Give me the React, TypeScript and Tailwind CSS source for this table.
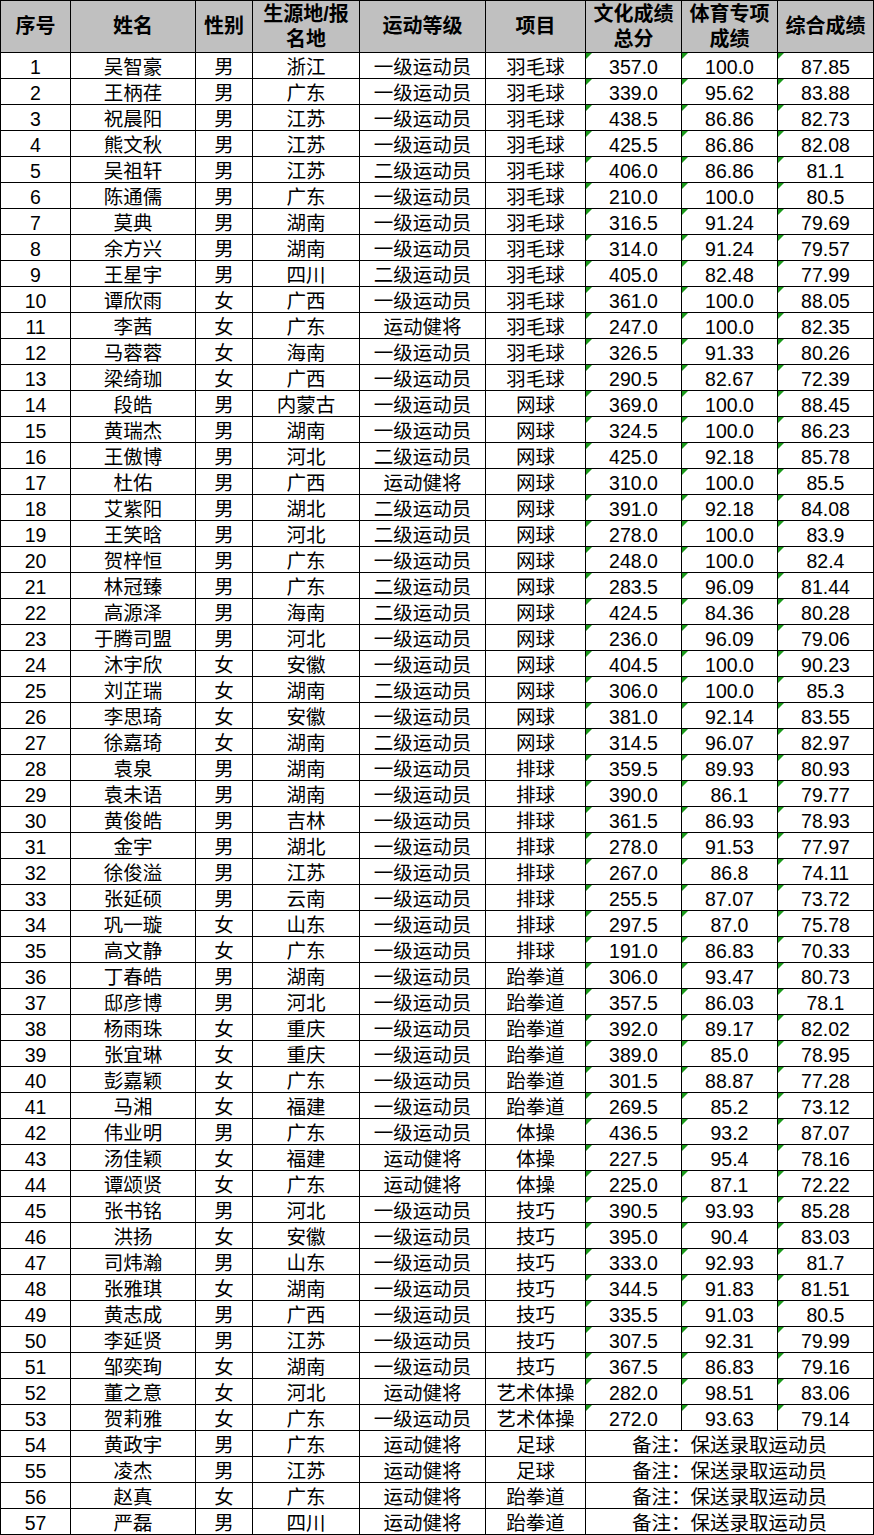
const rows: [string, string, string, string, string, string, string, string][] = [
  ["吴智豪", "男", "浙江", "一级运动员", "羽毛球", "357.0", "100.0", "87.85"],
  ["王柄荏", "男", "广东", "一级运动员", "羽毛球", "339.0", "95.62", "83.88"],
  ["祝晨阳", "男", "江苏", "一级运动员", "羽毛球", "438.5", "86.86", "82.73"],
  ["熊文秋", "男", "江苏", "一级运动员", "羽毛球", "425.5", "86.86", "82.08"],
  ["吴祖轩", "男", "江苏", "二级运动员", "羽毛球", "406.0", "86.86", "81.1"],
  ["陈通儒", "男", "广东", "一级运动员", "羽毛球", "210.0", "100.0", "80.5"],
  ["莫典", "男", "湖南", "一级运动员", "羽毛球", "316.5", "91.24", "79.69"],
  ["余方兴", "男", "湖南", "一级运动员", "羽毛球", "314.0", "91.24", "79.57"],
  ["王星宇", "男", "四川", "二级运动员", "羽毛球", "405.0", "82.48", "77.99"],
  ["谭欣雨", "女", "广西", "一级运动员", "羽毛球", "361.0", "100.0", "88.05"],
  ["李茜", "女", "广东", "运动健将", "羽毛球", "247.0", "100.0", "82.35"],
  ["马蓉蓉", "女", "海南", "一级运动员", "羽毛球", "326.5", "91.33", "80.26"],
  ["梁绮珈", "女", "广西", "一级运动员", "羽毛球", "290.5", "82.67", "72.39"],
  ["段皓", "男", "内蒙古", "一级运动员", "网球", "369.0", "100.0", "88.45"],
  ["黄瑞杰", "男", "湖南", "一级运动员", "网球", "324.5", "100.0", "86.23"],
  ["王傲博", "男", "河北", "二级运动员", "网球", "425.0", "92.18", "85.78"],
  ["杜佑", "男", "广西", "运动健将", "网球", "310.0", "100.0", "85.5"],
  ["艾紫阳", "男", "湖北", "二级运动员", "网球", "391.0", "92.18", "84.08"],
  ["王笑晗", "男", "河北", "二级运动员", "网球", "278.0", "100.0", "83.9"],
  ["贺梓恒", "男", "广东", "一级运动员", "网球", "248.0", "100.0", "82.4"],
  ["林冠臻", "男", "广东", "二级运动员", "网球", "283.5", "96.09", "81.44"],
  ["高源泽", "男", "海南", "二级运动员", "网球", "424.5", "84.36", "80.28"],
  ["于腾司盟", "男", "河北", "一级运动员", "网球", "236.0", "96.09", "79.06"],
  ["沐宇欣", "女", "安徽", "一级运动员", "网球", "404.5", "100.0", "90.23"],
  ["刘芷瑞", "女", "湖南", "二级运动员", "网球", "306.0", "100.0", "85.3"],
  ["李思琦", "女", "安徽", "一级运动员", "网球", "381.0", "92.14", "83.55"],
  ["徐嘉琦", "女", "湖南", "二级运动员", "网球", "314.5", "96.07", "82.97"],
  ["袁泉", "男", "湖南", "一级运动员", "排球", "359.5", "89.93", "80.93"],
  ["袁未语", "男", "湖南", "一级运动员", "排球", "390.0", "86.1", "79.77"],
  ["黄俊皓", "男", "吉林", "一级运动员", "排球", "361.5", "86.93", "78.93"],
  ["金宇", "男", "湖北", "一级运动员", "排球", "278.0", "91.53", "77.97"],
  ["徐俊溢", "男", "江苏", "一级运动员", "排球", "267.0", "86.8", "74.11"],
  ["张延硕", "男", "云南", "一级运动员", "排球", "255.5", "87.07", "73.72"],
  ["巩一璇", "女", "山东", "一级运动员", "排球", "297.5", "87.0", "75.78"],
  ["高文静", "女", "广东", "一级运动员", "排球", "191.0", "86.83", "70.33"],
  ["丁春皓", "男", "湖南", "一级运动员", "跆拳道", "306.0", "93.47", "80.73"],
  ["邸彦博", "男", "河北", "一级运动员", "跆拳道", "357.5", "86.03", "78.1"],
  ["杨雨珠", "女", "重庆", "一级运动员", "跆拳道", "392.0", "89.17", "82.02"],
  ["张宜琳", "女", "重庆", "一级运动员", "跆拳道", "389.0", "85.0", "78.95"],
  ["彭嘉颖", "女", "广东", "一级运动员", "跆拳道", "301.5", "88.87", "77.28"],
  ["马湘", "女", "福建", "一级运动员", "跆拳道", "269.5", "85.2", "73.12"],
  ["伟业明", "男", "广东", "一级运动员", "体操", "436.5", "93.2", "87.07"],
  ["汤佳颖", "女", "福建", "运动健将", "体操", "227.5", "95.4", "78.16"],
  ["谭颂贤", "女", "广东", "运动健将", "体操", "225.0", "87.1", "72.22"],
  ["张书铭", "男", "河北", "一级运动员", "技巧", "390.5", "93.93", "85.28"],
  ["洪扬", "女", "安徽", "一级运动员", "技巧", "395.0", "90.4", "83.03"],
  ["司炜瀚", "男", "山东", "一级运动员", "技巧", "333.0", "92.93", "81.7"],
  ["张雅琪", "女", "湖南", "一级运动员", "技巧", "344.5", "91.83", "81.51"],
  ["黄志成", "男", "广西", "一级运动员", "技巧", "335.5", "91.03", "80.5"],
  ["李延贤", "男", "江苏", "一级运动员", "技巧", "307.5", "92.31", "79.99"],
  ["邹奕珣", "女", "湖南", "一级运动员", "技巧", "367.5", "86.83", "79.16"],
  ["董之意", "女", "河北", "运动健将", "艺术体操", "282.0", "98.51", "83.06"],
  ["贺莉雅", "女", "广东", "一级运动员", "艺术体操", "272.0", "93.63", "79.14"],
];

// 保送录取 rows: no scores, one merged remark cell
const recommended: [string, string, string, string, string][] = [
  ["黄政宇", "男", "广东", "运动健将", "足球"],
  ["凌杰", "男", "江苏", "运动健将", "足球"],
  ["赵真", "女", "广东", "运动健将", "跆拳道"],
  ["严磊", "男", "四川", "运动健将", "跆拳道"],
];

const headers = ["序号", "姓名", "性别", "生源地/报名地", "运动等级", "项目", "文化成绩总分", "体育专项成绩", "综合成绩"];

const cell = "flex items-center justify-center bg-white pt-[4px] leading-[21px] whitespace-nowrap";

const Cell = ({ children, flag = false }: { children: React.ReactNode; flag?: boolean }) => (
  <div className={`${cell} relative`}>
    {/* excel "number stored as text" marker */}
    {flag && (
      <span className="absolute left-0 top-0 h-0 w-0 border-t-[6px] border-r-[6px] border-t-[#1a9a1a] border-r-transparent" />
    )}
    {children}
  </div>
);

export default function App() {
  return (
    <div
      className="grid w-[874px] grid-cols-[69px_124px_56px_106px_125px_99px_95px_95px_95px] auto-rows-[25px] gap-px bg-black p-px text-[19.5px] text-black"
      style={{ fontFamily: '"Liberation Sans", Arial, "Noto Sans CJK SC", sans-serif' }}
    >
      {headers.map((h) => (
        <div
          key={h}
          className="row-span-2 flex items-center justify-center bg-[#c0c0c0] px-1 text-center text-[20px] font-bold leading-[25px]"
        >
          {h}
        </div>
      ))}

      {rows.map((r, i) => (
        <div key={i} className="contents">
          <Cell>{i + 1}</Cell>
          <Cell>{r[0]}</Cell>
          <Cell>{r[1]}</Cell>
          <Cell>{r[2]}</Cell>
          <Cell>{r[3]}</Cell>
          <Cell>{r[4]}</Cell>
          <Cell flag>{r[5]}</Cell>
          <Cell flag>{r[6]}</Cell>
          <Cell flag>{r[7]}</Cell>
        </div>
      ))}

      {recommended.map((r, i) => (
        <div key={i} className="contents">
          <Cell>{rows.length + i + 1}</Cell>
          <Cell>{r[0]}</Cell>
          <Cell>{r[1]}</Cell>
          <Cell>{r[2]}</Cell>
          <Cell>{r[3]}</Cell>
          <Cell>{r[4]}</Cell>
          <div className={`${cell} col-span-3`}>备注：保送录取运动员</div>
        </div>
      ))}
    </div>
  );
}
